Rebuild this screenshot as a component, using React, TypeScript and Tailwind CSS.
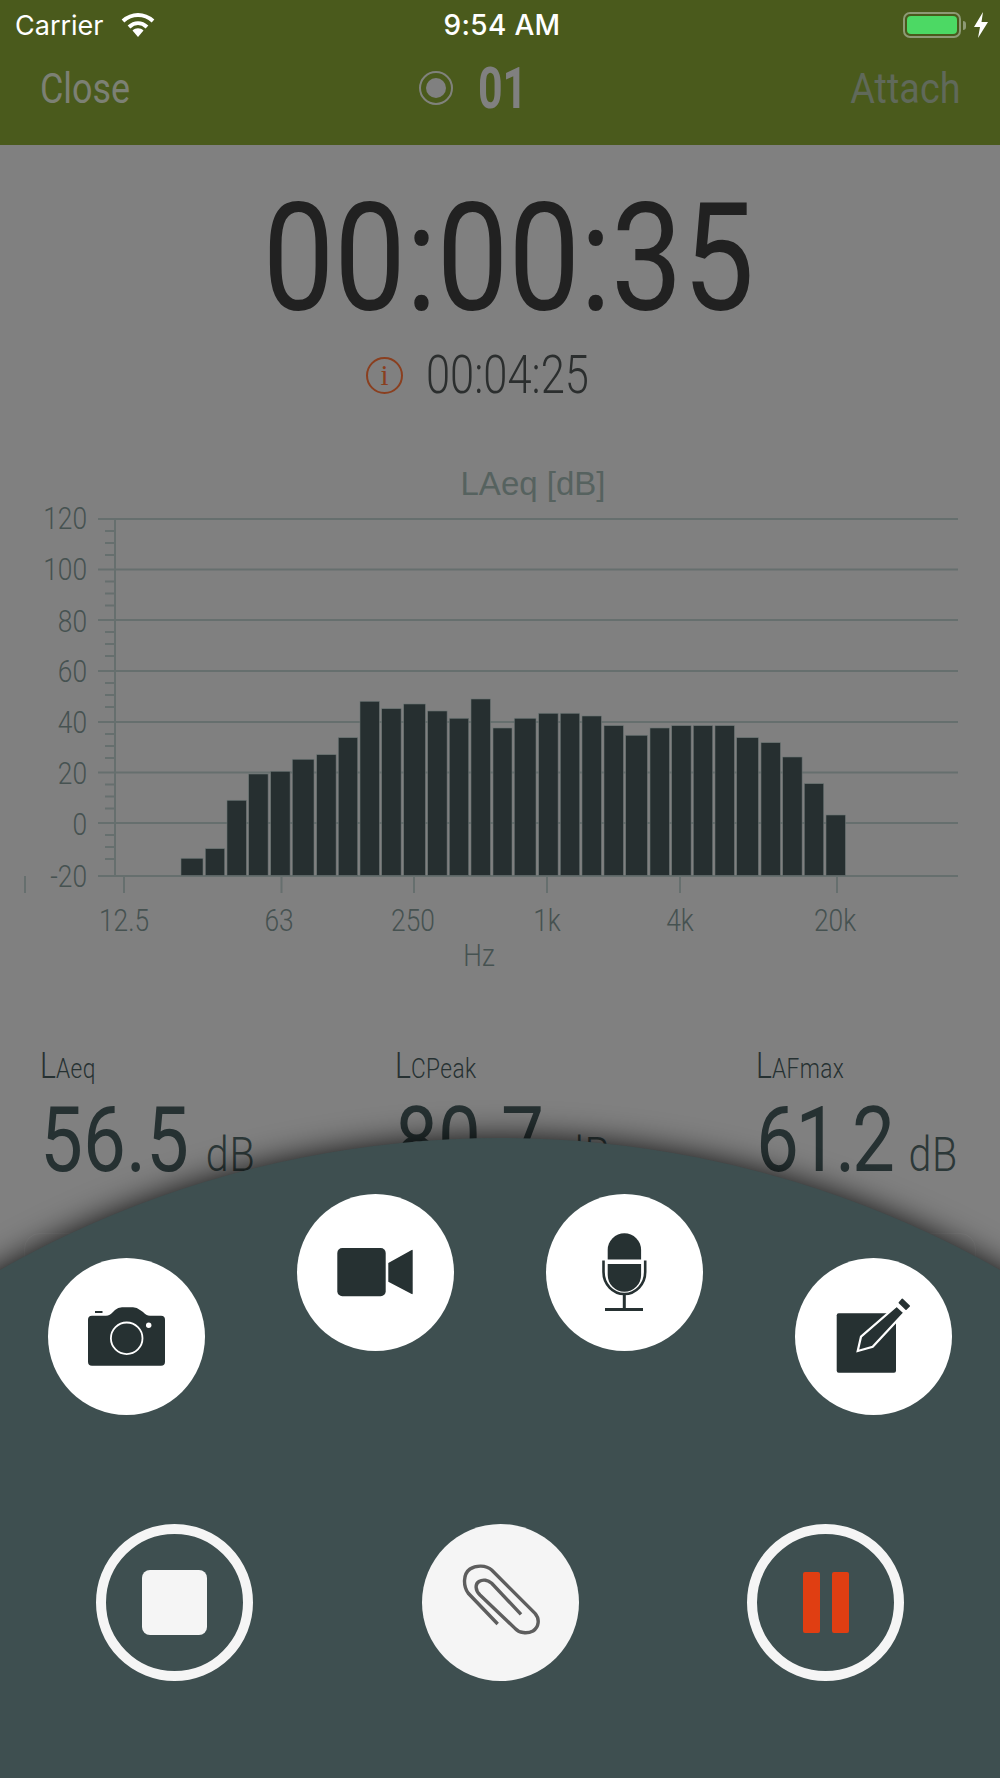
import React from "react";

const ROBOTO = "font-['Roboto',sans-serif]";

// x, width and top edge of each third-octave band
const BANDS: [number, number, number][] = [
  [181, 22, 858.3], [205.3, 19.4, 848.7], [227, 19.4, 800.3], [248.7, 19.4, 774],
  [270.7, 19.4, 771.3], [292.3, 21.7, 759.3], [316.7, 19.4, 754.7], [338.3, 19.4, 737.7],
  [360, 19.4, 701.3], [381.7, 19.4, 708.7], [403.7, 21.7, 704], [427.7, 19.4, 711],
  [449.3, 19.4, 718.3], [471, 19.4, 699], [493, 19, 728], [514.3, 21.7, 718.3],
  [538.7, 19.4, 713.3], [560.3, 19.4, 713.3], [582, 19.4, 716], [604, 19.4, 725.7],
  [625.7, 21.7, 735.3], [650, 19.4, 728], [671.7, 19.4, 725.7], [693.3, 19.4, 725.7],
  [715, 19.4, 725.7], [736.7, 21.7, 737.7], [761, 19.4, 742.7], [782.7, 19.4, 757],
  [804.3, 19.4, 783.7], [826, 19.4, 815],
];

const Y_TICKS: [string, number, number][] = [
  ["120", 519, 529], ["100", 569.5, 580], ["80", 620, 632], ["60", 671, 682],
  ["40", 722, 733], ["20", 772.5, 784], ["0", 823, 835], ["-20", 876, 887],
];

const X_TICKS: [string, number, number][] = [
  ["12.5", 124, 124], ["63", 279, 281.5], ["250", 413, 414], ["1k", 547, 547], ["4k", 680, 680], ["20k", 835, 837],
];

// Roboto squeezed horizontally to get the app's condensed digits
function AxisLabel({ x, y, anchor, children }: { x: number; y: number; anchor: "middle" | "end"; children: string }) {
  return (
    <text
      transform={`translate(${x} ${y}) scale(0.85 1)`}
      textAnchor={anchor}
      fontSize="31"
      fontWeight="300"
      fill="#465251"
      fontFamily="Roboto, sans-serif"
    >
      {children}
    </text>
  );
}

function Spectrum() {
  const line = "#666f6e";
  const minors = Y_TICKS.slice(0, -1).flatMap(([, y]) => [y + 12, y + 24, y + 36]);
  return (
    <svg viewBox="0 460 1000 520" className="block h-[520px] w-[1000px]">
      <text x="533" y="495" textAnchor="middle" fontSize="33" fill="#56625f" fontFamily="'Liberation Sans', sans-serif">
        LAeq [dB]
      </text>
      {Y_TICKS.map(([label, y, base]) => (
        <g key={label}>
          <line x1="98" x2="958" y1={y} y2={y} stroke={line} strokeWidth="2" />
          <AxisLabel x={87} y={base} anchor="end">{label}</AxisLabel>
        </g>
      ))}
      {minors.map((y) => (
        <line key={y} x1="105" x2="115" y1={y} y2={y} stroke={line} strokeWidth="2" />
      ))}
      <line x1="115" x2="115" y1="519" y2="877" stroke={line} strokeWidth="2" />
      <line x1="25" x2="25" y1="876" y2="893" stroke={line} strokeWidth="2" />
      {X_TICKS.map(([label, x, tick]) => (
        <g key={label}>
          <line x1={tick} x2={tick} y1="877" y2="893" stroke={line} strokeWidth="2" />
          <AxisLabel x={x} y={931} anchor="middle">{label}</AxisLabel>
        </g>
      ))}
      <AxisLabel x={479} y={966} anchor="middle">Hz</AxisLabel>
      {BANDS.map(([x, w, top]) => (
        <rect key={x} x={x} y={top} width={w} height={875.5 - top} fill="#262f30" stroke="#6a7473" strokeWidth="0.6" />
      ))}
    </svg>
  );
}

function Metric({ sub, value, width, tight }: { sub: string; value: string; width: string; tight?: boolean }) {
  return (
    <div className={width}>
      <div className={`flex origin-left scale-x-[0.84] flex-col text-[#263132] ${ROBOTO}`}>
        <div className="flex h-[44px] items-baseline leading-none">
          <span className="text-[36px] font-light">L</span>
          <span className="text-[27px] font-light tracking-[0.5px]">{sub}</span>
        </div>
        <div className="mt-[3px] flex items-baseline gap-[20px] whitespace-nowrap leading-none">
          <span className={tight ? "text-[91px] tracking-[-4px]" : "text-[91px]"}>{value}</span>
          <span className="text-[49px] font-light tracking-[1px] text-[#2c3838]">dB</span>
        </div>
      </div>
    </div>
  );
}

function StatusBar() {
  return (
    <div className="flex h-[50px] items-center justify-between pl-[15px] pr-[11px] font-['Inter',sans-serif] text-white">
      <div className="flex w-[300px] items-center gap-[17px]">
        <span className="text-[27px] leading-none">Carrier</span>
        <svg viewBox="0 0 34 26" className="h-[26px] w-[34px]" fill="none" stroke="#fff" strokeWidth="4">
          <path d="M2 9c9-8 21-8 30 0" />
          <path d="M8 15c5.500-5 12.500-5 18 0" />
          <path d="M11.500 18.500 17 25l5.500-6.500c-3-3-8-3-11 0z" fill="#fff" stroke="none" />
        </svg>
      </div>
      <span className="text-[28px] font-medium leading-none tracking-[0.3px]">9:54 AM</span>
      <div className="flex w-[300px] items-center justify-end">
        <div className="h-[26px] w-[58px] rounded-[7px] border-2 border-[#8e9a76] p-[2px]">
          <div className="h-full w-full rounded-[4px] bg-[#4cd964]" />
        </div>
        <div className="ml-[2px] h-[9px] w-[3px] rounded-r-full bg-[#8e9a76]" />
        <svg viewBox="0 0 16 26" className="ml-[7px] h-[26px] w-[16px]" fill="#fff">
          <path d="M10 0 1 15h6l-2 11 10-16H8.500z" />
        </svg>
      </div>
    </div>
  );
}

function Header() {
  return (
    <header className="h-[145px] shrink-0 bg-[#4a5a1c]">
      <StatusBar />
      <div className={`flex h-[76px] items-center pl-[40px] pr-[40px] text-[42px] ${ROBOTO}`}>
        <span className="w-[379px] origin-left scale-x-[0.855] text-[#7c8074]">Close</span>
        <div className="flex h-[34px] w-[34px] items-center justify-center rounded-full border-2 border-[#80827c]">
          <div className="h-[20px] w-[20px] rounded-full bg-[#808080]" />
        </div>
        <span className="ml-[25px] origin-left scale-x-[0.74] text-[58px] font-bold leading-none text-[#808080]">01</span>
        <span className="ml-auto origin-right scale-x-[0.9] text-[#60695a]">Attach</span>
      </div>
    </header>
  );
}

function RoundButton({ children, ring, light }: { children: React.ReactNode; ring?: boolean; light?: boolean }) {
  return (
    <button
      className={
        ring
          ? "relative flex h-[157px] w-[157px] items-center justify-center rounded-full border-[10px] border-[#f5f5f5]"
          : light
            ? "flex h-[157px] w-[157px] items-center justify-center rounded-full bg-[#f5f5f5]"
            : "flex h-[157px] w-[157px] items-center justify-center rounded-full bg-white"
      }
    >
      {children}
    </button>
  );
}

function ActionIcon({ children }: { children: React.ReactNode }) {
  return (
    <svg viewBox="0 0 157 157" className="h-[157px] w-[157px]" fill="#263132">
      {children}
    </svg>
  );
}

function ActionSheet() {
  return (
    <div className="absolute inset-x-0 top-[1138px] bottom-0">
      {/* the arc edge: a circle much wider than the page, clipped by the root */}
      <div className="absolute left-[-513px] top-0 h-[2026px] w-[2026px] rounded-full bg-[#3e4f50] shadow-[0_0_32px_rgba(0,0,0,0.9)]" />
      <div className="relative flex h-full flex-col">
        <div className="mt-[56px] flex items-start justify-between px-[48px]">
          <div className="mt-[64px]">
            <RoundButton>
              <ActionIcon>
                <path d="M44 57.700h14q4 0 7-3.700l2-2q3-2.700 7-2.700h11q4 0 7 2.700l3 2q3 3.700 7 3.700h11a4 4 0 0 1 4 4v42a4 4 0 0 1-4 4H44a4 4 0 0 1-4-4v-42a4 4 0 0 1 4-4z" />
                <rect x="47" y="53" width="7.500" height="2" />
                <circle cx="78.700" cy="80.300" r="15.800" fill="none" stroke="#fff" strokeWidth="1.800" />
                <circle cx="100.700" cy="67.300" r="2.700" fill="#fff" />
              </ActionIcon>
            </RoundButton>
          </div>
          <RoundButton>
            <ActionIcon>
              <rect x="40.300" y="54" width="48.400" height="48.300" rx="5" />
              <path d="M91.300 69 114.700 56a.7.700 0 0 1 1 .6v43a.7.700 0 0 1-1 .4L91.300 87.700z" />
            </ActionIcon>
          </RoundButton>
          <RoundButton>
            <ActionIcon>
              <path d="M61.700 65.500V56a16.700 16.700 0 0 1 33.400 0v9.500z" />
              <path d="M61.700 70h33.400v11a16.700 16.700 0 0 1-33.400 0z" />
              <path d="M57.500 66.500V78a20.850 22 0 0 0 41.700 0V66.500" fill="none" stroke="#263132" strokeWidth="2.600" />
              <path d="M78.300 101v14M59 115.500h38" fill="none" stroke="#263132" strokeWidth="3" />
            </ActionIcon>
          </RoundButton>
          <div className="mt-[64px]">
            <RoundButton>
              <ActionIcon>
                <rect x="41.700" y="55.300" width="59.300" height="59.400" rx="2" />
                <path d="M62.700 93 66 78.700 101.700 47.700 109.300 54.700 77.700 88.700z" stroke="#fff" strokeWidth="2.200" />
                <path d="m104.300 44.700 3-3.400 7 6.700-3.300 3.300z" stroke="#263132" strokeWidth="1.500" strokeLinejoin="round" />
              </ActionIcon>
            </RoundButton>
          </div>
        </div>
        <div className="mt-[109px] flex items-center justify-between px-[96px]">
          <RoundButton ring>
            <div className="h-[65px] w-[65px] rounded-[8px] bg-[#f5f5f5]" />
          </RoundButton>
          <RoundButton light>
            <ActionIcon>
              <path
                d="M75.700 100 46.300 69.300C41 62 41 50 48 45c6-4 16-4 21.700 1L113 89.300c5 5.700 4 13.700-2 17.700-6 3-14 2-18-2.700L58 71c-5-5-5-11-1-13.500 4-2.500 9-1.500 12.700 1.800L99 90.300"
                fill="none"
                stroke="#5e5e5e"
                strokeWidth="3.400"
              />
            </ActionIcon>
          </RoundButton>
          <RoundButton ring>
            <div className="flex gap-[12px]">
              <div className="h-[61px] w-[17px] rounded-[2px] bg-[#e03e12]" />
              <div className="h-[61px] w-[17px] rounded-[2px] bg-[#e03e12]" />
            </div>
          </RoundButton>
        </div>
      </div>
    </div>
  );
}

export default function App() {
  return (
    <div className="relative flex h-[1778px] w-[1000px] flex-col overflow-hidden bg-[#808080]">
      <Header />
      <div className={`flex flex-col ${ROBOTO}`}>
        <div className="mt-[39px] scale-x-[0.85] pl-[20px] text-center text-[150px] leading-[150px] text-[#212121]">
          00:00:35
        </div>
        <div className="mt-[11px] flex items-center pl-[366px]">
          <div className="flex h-[37px] w-[37px] items-center justify-center rounded-full border-2 border-[#8a3f1f] font-['Liberation_Serif',serif] text-[29px] leading-none text-[#8a3f1f]">
            i
          </div>
          <span className="ml-[23px] origin-left scale-x-[0.805] text-[54px] font-light leading-[60px] text-[#2b2e2e]">
            00:04:25
          </span>
        </div>
      </div>
      <div className="mt-[55px]">
        <Spectrum />
      </div>
      <div className="mt-[68px] flex pl-[40px]">
        <Metric sub="Aeq" value="56.5" width="w-[355px]" />
        <Metric sub="CPeak" value="80.7" width="w-[361px]" />
        <Metric sub="AFmax" value="61.2" width="w-[204px]" tight />
      </div>
      <div className="mx-[24px] mt-[47px] h-[200px] rounded-[16px] border border-white/[0.05]" />
      <ActionSheet />
    </div>
  );
}
